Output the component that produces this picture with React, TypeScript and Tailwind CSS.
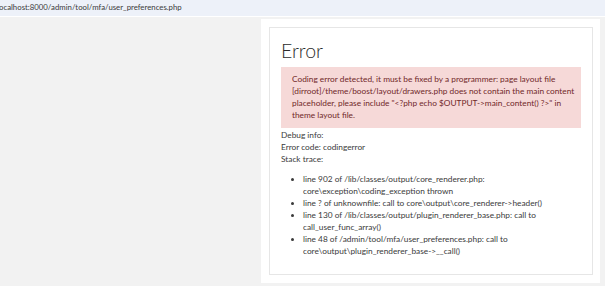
import React from "react";

export default function App() {
  const font = { fontFamily: "Lato, 'Open Sans', sans-serif" };
  return (
    <div className="w-[605px] h-[286px] bg-[#f2f2f2] overflow-hidden text-[#333]" style={font}>
      <div className="h-[17px] bg-[#edf1f9] border-b border-white flex items-center">
        <span className="text-[7.8px] text-[#3a3a3a] -ml-[1px] whitespace-nowrap">ocalhost:8000/admin/tool/mfa/user_preferences.php</span>
      </div>
      <div className="flex pt-[2px]">
        <div className="w-[261px]" />
        <div className="w-[339px] h-[264px] bg-white pt-[8px] pl-[8px] pr-[7px]">
          <div className="h-[248px] border border-[#e6e6e6] px-[11px] pt-[10px]">
            <h1 className="text-[19.5px] font-light leading-[26px] text-[#2b2b2b]">Error</h1>
            <div className="mt-[3px] bg-[#f6d9d8] text-[#702828] text-[8.3px] leading-[12px] pl-[11px] pr-[4px] pt-[6px] pb-[7px] whitespace-nowrap">
              Coding error detected, it must be fixed by a programmer: page layout file<br />
              [dirroot]/theme/boost/layout/drawers.php does not contain the main content<br />
              placeholder, please include "&lt;?php echo $OUTPUT-&gt;main_content() ?&gt;" in<br />
              theme layout file.
            </div>
            <div className="text-[8.3px] leading-[12px] text-[#3a3a3a] mt-[1px] whitespace-nowrap">
              <div>Debug info:</div>
              <div>Error code: codingerror</div>
              <div>Stack trace:</div>
              <ul className="mt-[8px] pl-[22px] list-disc">
                <li>line 902 of /lib/classes/output/core_renderer.php:<br />core\exception\coding_exception thrown</li>
                <li>line ? of unknownfile: call to core\output\core_renderer-&gt;header()</li>
                <li>line 130 of /lib/classes/output/plugin_renderer_base.php: call to<br />call_user_func_array()</li>
                <li>line 48 of /admin/tool/mfa/user_preferences.php: call to<br />core\output\plugin_renderer_base-&gt;__call()</li>
              </ul>
            </div>
          </div>
        </div>
      </div>
    </div>
  );
}
